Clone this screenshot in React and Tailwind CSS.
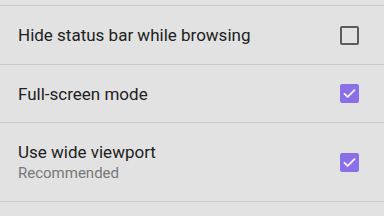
import React from "react";

function Checkbox({ checked }) {
  if (checked) {
    return (
      <div className="w-[19px] h-[19px] rounded-[2px] bg-[#8b6fe6] flex items-center justify-center">
        <svg width="15" height="15" viewBox="0 0 24 24" fill="none" stroke="#f4f0ff" strokeWidth="3" strokeLinecap="round" strokeLinejoin="round">
          <path d="M4 12.5l5 5L20 6.5" />
        </svg>
      </div>
    );
  }
  return <div className="w-[19px] h-[19px] rounded-[2px] border-2 border-[#5c5c5c]" />;
}

function Divider() {
  return <div className="h-px bg-[#c9c9c9] shrink-0" />;
}

function Row({ h, title, sub, checked }) {
  return (
    <div className={`${h} flex items-center pl-[18px] pr-[25px] shrink-0`}>
      <div className="flex-1 flex flex-col">
        <div className="text-[17px] leading-[22px] text-[#212121]">{title}</div>
        {sub && <div className="text-[15px] leading-[20px] text-[#777777]">{sub}</div>}
      </div>
      <Checkbox checked={checked} />
    </div>
  );
}

export default function App() {
  return (
    <div className="w-[384px] h-[216px] bg-[#e2e2e2] overflow-hidden flex flex-col font-['Roboto',sans-serif]">
      <div className="h-[5px] shrink-0" />
      <Divider />
      <Row h="h-[58px]" title="Hide status bar while browsing" checked={false} />
      <Divider />
      <Row h="h-[57px]" title="Full-screen mode" checked={true} />
      <Divider />
      <Row h="h-[78px]" title="Use wide viewport" sub="Recommended" checked={true} />
      <Divider />
    </div>
  );
}
